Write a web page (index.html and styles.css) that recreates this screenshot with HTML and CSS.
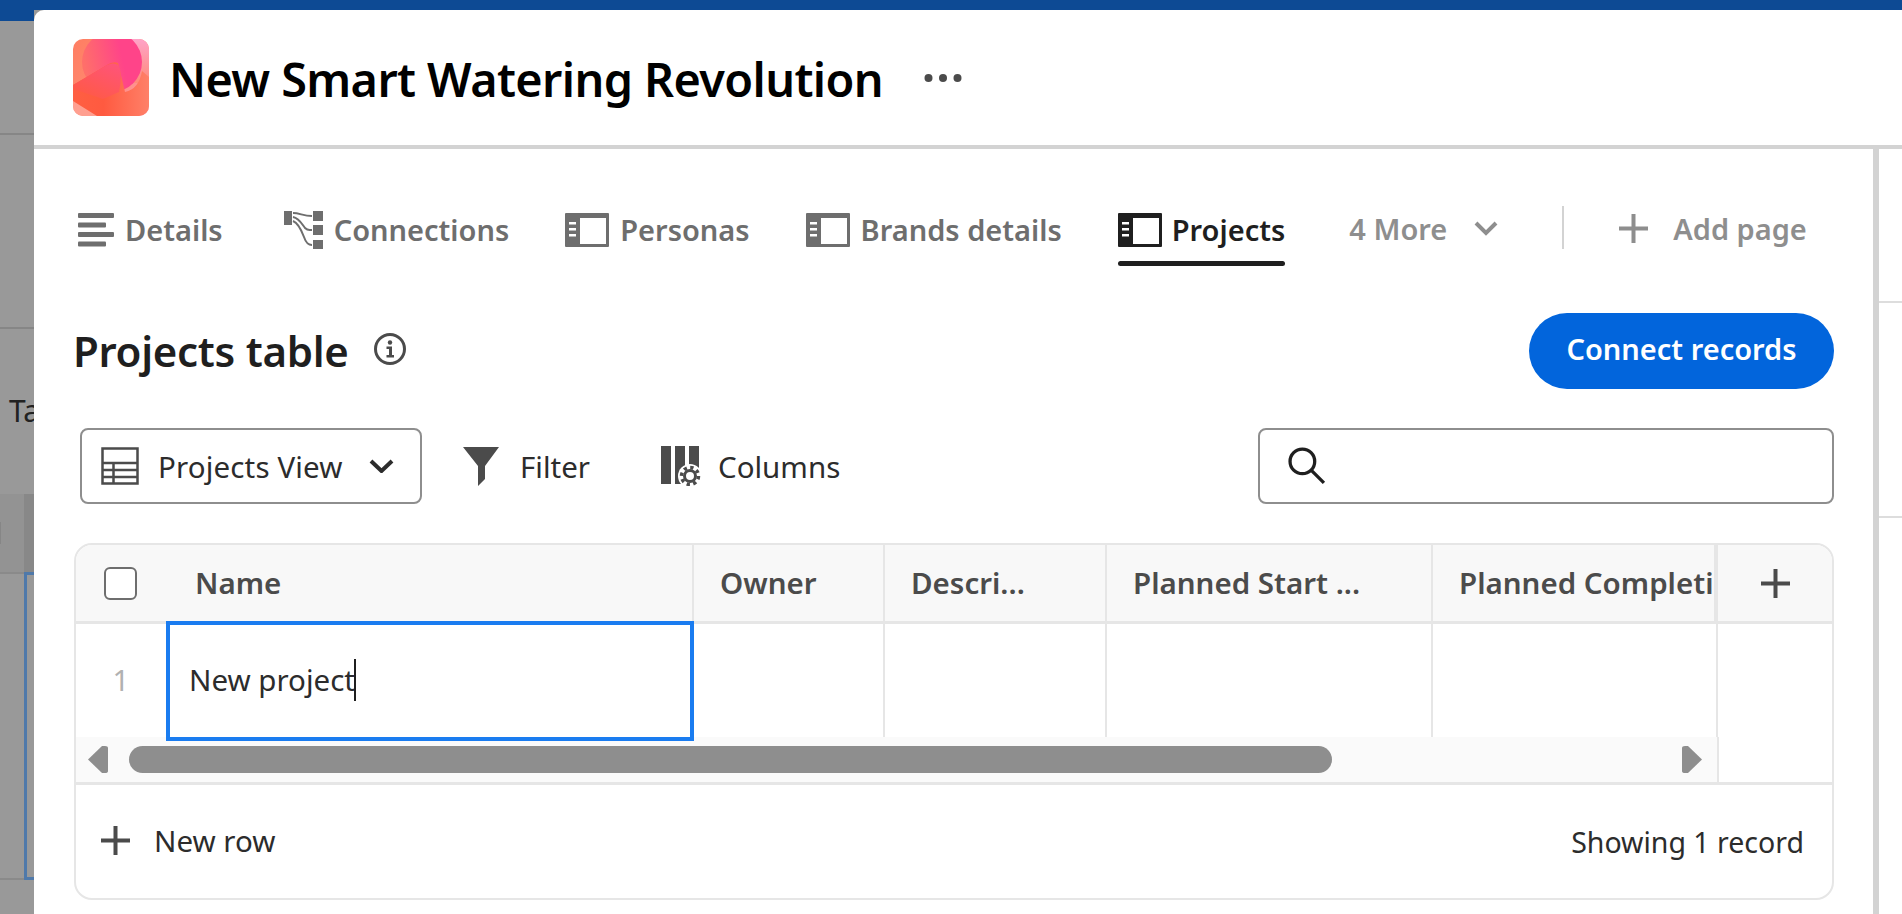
FILE: index.html
```html
<!DOCTYPE html>
<html lang="en">
<head>
<meta charset="utf-8">
<title>New Smart Watering Revolution</title>
<link rel="stylesheet" href="styles.css">
</head>
<body>
<div class="band"></div>
<aside class="backdrop">
  <div class="bd-sec bd-a"></div>
  <div class="bd-sec bd-b"></div>
  <div class="bd-sec bd-c"><span class="bd-text">Ta</span></div>
  <div class="bd-sec bd-d"><span class="bd-notch"></span></div>
  <div class="bd-sec bd-e"><div class="bd-outline"></div></div>
  <div class="bd-sec bd-f"></div>
</aside>
<main class="modal">
  <header class="modal-head">
    <svg class="logo" viewBox="0 0 76 77">
      <defs>
        <linearGradient id="lgBase" x1="0" y1="0" x2="1" y2="1"><stop offset="0" stop-color="#ff7e62"/><stop offset="0.55" stop-color="#ff8a72"/><stop offset="1" stop-color="#ffa0c8"/></linearGradient>
        <linearGradient id="lgCircle" x1="0.05" y1="0.6" x2="0.95" y2="0.4"><stop offset="0" stop-color="#ff6f6a"/><stop offset="0.7" stop-color="#ff4489"/><stop offset="1" stop-color="#ff4489"/></linearGradient>
        <linearGradient id="lgArrow" x1="0" y1="0" x2="1" y2="0"><stop offset="0" stop-color="#ff5f42"/><stop offset="0.4" stop-color="#ff5a40"/><stop offset="1" stop-color="#ff8068"/></linearGradient>
        <linearGradient id="lgSoft" x1="0.2" y1="1" x2="0.8" y2="0"><stop offset="0" stop-color="#ff5a42"/><stop offset="1" stop-color="#ff5478"/></linearGradient>
        <linearGradient id="lgCorner" x1="0" y1="0" x2="0" y2="1"><stop offset="0" stop-color="#ffa3c8"/><stop offset="1" stop-color="#ff8a78"/></linearGradient>
        <clipPath id="lgClip"><rect width="76" height="77" rx="10"/></clipPath>
      </defs>
      <g clip-path="url(#lgClip)">
        <rect width="76" height="77" fill="url(#lgBase)"/>
        <rect x="50" width="26" height="44" fill="url(#lgCorner)"/>
        <rect y="55" width="30" height="22" fill="#ff9f90"/>
        <circle cx="39" cy="23" r="30" fill="url(#lgCircle)"/>
        <path d="M0 46 L34 26 Q40 22 45 24 L52 53 Q66 50 69 32 L76 38 V77 H24 L0 62 Z" fill="url(#lgArrow)"/>
        <path d="M0 46 L34 26 Q40 23 45 26 Q50 32 46 53 L30 60 L0 50Z" fill="url(#lgSoft)"/>
      </g>
    </svg>
    <h1 class="title">New Smart Watering Revolution</h1>
    <svg class="more-dots" viewBox="0 0 38 10"><circle cx="4.500" cy="5" r="4"/><circle cx="19" cy="5" r="4"/><circle cx="33.500" cy="5" r="4"/></svg>
  </header>
  <div class="modal-body">
    <section class="panel">
      <nav class="tabs">
        <a class="tab t-details">
          <svg class="ico-details" viewBox="0 0 36 34"><rect y="0" width="36" height="5" rx="1"/><rect y="9.500" width="28" height="5" rx="1"/><rect y="19" width="36" height="5" rx="1"/><rect y="28.500" width="28" height="5" rx="1"/></svg>
          <span>Details</span>
        </a>
        <a class="tab t-conn">
          <svg class="ico-conn" viewBox="0 0 39 38"><rect y="0" width="8" height="14"/><rect x="29" y="0" width="10" height="10"/><rect x="29" y="14" width="10" height="10"/><rect x="29" y="29" width="10" height="9"/><path class="conn-line" d="M9 2 C16 2 19 5 28 5 M9 6 C15 7 18 13 21 17 C24 20 25 19 28 19 M9 10 C14 12 17 18 20 26 C22 32 24 34 28 34"/></svg>
          <span>Connections</span>
        </a>
        <a class="tab t-pers">
          <svg class="ico-page" viewBox="0 0 44 34"><rect width="44" height="34" rx="1"/><rect class="pane" x="15" y="5" width="26" height="26"/><rect class="pane" x="4" y="9" width="7" height="2.500"/><rect class="pane" x="4" y="15" width="7" height="2.500"/><rect class="pane" x="4" y="21" width="7" height="2.500"/></svg>
          <span>Personas</span>
        </a>
        <a class="tab t-brand">
          <svg class="ico-page" viewBox="0 0 44 34"><rect width="44" height="34" rx="1"/><rect class="pane" x="15" y="5" width="26" height="26"/><rect class="pane" x="4" y="9" width="7" height="2.500"/><rect class="pane" x="4" y="15" width="7" height="2.500"/><rect class="pane" x="4" y="21" width="7" height="2.500"/></svg>
          <span>Brands details</span>
        </a>
        <a class="tab tab-active">
          <svg class="ico-page" viewBox="0 0 44 34"><rect width="44" height="34" rx="1"/><rect class="pane" x="15" y="5" width="26" height="26"/><rect class="pane" x="4" y="9" width="7" height="2.500"/><rect class="pane" x="4" y="15" width="7" height="2.500"/><rect class="pane" x="4" y="21" width="7" height="2.500"/></svg>
          <span>Projects</span>
        </a>
        <a class="tab-more">
          <span>4 More</span>
          <svg class="chev-more" viewBox="0 0 24 15"><path d="M2 2 L12 12 L22 2"/></svg>
        </a>
        <span class="tab-divider"></span>
        <a class="tab-add">
          <svg class="plus-add" viewBox="0 0 29 29"><path d="M14.500 0 V29 M0 14.500 H29"/></svg>
          <span>Add page</span>
        </a>
      </nav>
      <div class="title-row">
        <div class="title-left">
          <h2 class="table-title">Projects table</h2>
          <svg class="ico-info" viewBox="0 0 32 32"><circle cx="16" cy="16" r="14.500"/><circle class="solid" cx="16" cy="9.500" r="2.200"/><path class="solid" d="M12.500 13.500 H18 V22 H20 V24.500 H12.500 V22 H15 V16 H12.500 Z"/></svg>
        </div>
        <button class="btn-primary">Connect records</button>
      </div>
      <div class="toolbar">
        <div class="view-select">
          <svg class="ico-table" viewBox="0 0 38 38"><path d="M1.500 1.500 H36.500 V36.500 H1.500 Z M1.500 16 H36.500 M1.500 23 H36.500 M1.500 30 H36.500 M12.500 16 V36.500"/></svg>
          <span class="view-name">Projects View</span>
          <svg class="chev-view" viewBox="0 0 25 14"><path d="M2 2 L12.500 12 L23 2"/></svg>
        </div>
        <div class="tool t-filter">
          <svg class="ico-filter" viewBox="0 0 36 39"><path d="M0 0 H36 L22 19 V32 L15 39 V19 Z"/></svg>
          <span>Filter</span>
        </div>
        <div class="tool t-cols">
          <svg class="ico-cols" viewBox="0 0 42 40"><rect x="0" y="0" width="10" height="38"/><rect x="14" y="0" width="10" height="38"/><rect x="28" y="0" width="10" height="38"/><circle class="halo" cx="29" cy="30" r="12"/><circle class="gear" cx="29" cy="30" r="5.500"/><circle class="teeth" cx="29" cy="30" r="8.500"/></svg>
          <span>Columns</span>
        </div>
        <div class="search">
          <svg class="ico-search" viewBox="0 0 37 37"><circle cx="14" cy="14" r="12"/><path d="M23 23 L35 35"/></svg>
        </div>
      </div>
      <div class="grid-card">
        <div class="row row-head">
          <div class="c c-num"><span class="checkbox"></span></div>
          <div class="c c-name"><span>Name</span></div>
          <div class="c c-owner"><span>Owner</span></div>
          <div class="c c-desc"><span>Descri...</span></div>
          <div class="c c-start"><span>Planned Start ...</span></div>
          <div class="c c-comp"><span class="clip">Planned Completion Date</span></div>
          <div class="c c-add"><svg class="plus-col" viewBox="0 0 29 29"><path d="M14.500 0 V29 M0 14.500 H29"/></svg></div>
        </div>
        <div class="row row-body">
          <div class="c c-num"><span class="rownum">1</span></div>
          <div class="c c-name"><div class="editor"><span>New project</span><i class="caret"></i></div></div>
          <div class="c c-owner"></div>
          <div class="c c-desc"></div>
          <div class="c c-start"></div>
          <div class="c c-comp"></div>
          <div class="c c-add"></div>
        </div>
        <div class="row row-scroll">
          <div class="scrollbar">
            <svg class="arrow" viewBox="0 0 20 27"><path d="M20 2 Q20 0 17 0 L14 0 L0 13.500 L14 27 L17 27 Q20 27 20 25 Z"/></svg>
            <span class="thumb"></span>
            <svg class="arrow arrow-r" viewBox="0 0 20 27"><path d="M0 2 Q0 0 3 0 L6 0 L20 13.500 L6 27 L3 27 Q0 27 0 25 Z"/></svg>
          </div>
          <div class="scroll-end"></div>
        </div>
        <div class="grid-foot">
          <div class="new-row">
            <svg class="plus-row" viewBox="0 0 29 29"><path d="M14.500 0 V29 M0 14.500 H29"/></svg>
            <span>New row</span>
          </div>
          <span class="count">Showing 1 record</span>
        </div>
      </div>
    </section>
    <aside class="side">
      <div class="side-a"></div>
      <div class="side-b"></div>
    </aside>
  </div>
</main>
</body>
</html>
```
FILE: styles.css
```css
* { box-sizing: border-box; }
html, body { margin: 0; height: 914px; overflow: hidden; }
body { background: #999; font-family: "Noto Sans", sans-serif; color: #1f1f1f; position: relative; }
svg { display: block; flex: none; }
.band { height: 10px; background: #0d4a94; }

/* dimmed page behind the dialog */
.backdrop { width: 34px; display: flex; flex-direction: column; height: 904px; }
.bd-sec { flex: none; width: 34px; }
.bd-a { height: 125px; background: linear-gradient(#0d4a94 11px, #999 11px); border-bottom: 2px solid #868686; }
.bd-b { height: 194px; border-bottom: 2px solid #868686; }
.bd-c { height: 165px; padding: 62px 0 0 9px; white-space: nowrap; }
.bd-text { font-size: 30px; line-height: 40px; color: #222; display: block; }
.bd-d { height: 78px; background: linear-gradient(90deg, #939393 24px, #888 24px); padding-top: 28px; }
.bd-notch { display: block; width: 1px; height: 22px; background: #868686; }
.bd-e { height: 308px; border-top: 2px solid #8a8a8a; border-bottom: 2px solid #8a8a8a; }
.bd-outline { height: 308px; margin: -2px 0 0 24px; border: solid #4f79aa; border-width: 3px 0 3px 3px; }
.bd-f { height: 34px; }

/* dialog */
.modal { position: absolute; left: 34px; top: 10px; right: 0; bottom: 0; background: #fff; border-top-left-radius: 10px; display: flex; flex-direction: column; }
.modal-head { height: 139px; flex: none; border-bottom: 4px solid #d3d3d3; padding: 29px 0 0 39px; display: flex; align-items: flex-start; }
.logo { width: 76px; height: 77px; }
.title { margin: 9px 0 0 20px; font-size: 46.800px; line-height: 62px; font-weight: 600; color: #000; letter-spacing: -0.6px; white-space: nowrap; }
.more-dots { width: 38px; height: 10px; margin: 34px 0 0 41px; fill: #4b4b4b; }
.modal-body { flex: 1; display: flex; min-height: 0; }
.panel { width: 1845px; flex: none; border-right: 6px solid #d3d3d3; padding: 0 0 0 40px; display: flex; flex-direction: column; }
.side { flex: 1; display: flex; flex-direction: column; }
.side-a { height: 154px; border-bottom: 2px solid #ddd; }
.side-b { height: 215px; border-bottom: 2px solid #ddd; }

/* tabs */
.tabs { height: 117px; padding: 57px 0 0 4px; display: flex; align-items: flex-start; font-size: 29px; font-weight: 600; color: #6e6e6e; flex: none; }
.tab { display: flex; align-items: center; height: 60px; gap: 11px; white-space: nowrap; padding-bottom: 12px; }
.tab span { margin-top: -2px; }
.tab svg { fill: #6e6e6e; }
.ico-details { width: 36px; height: 34px; }
.ico-conn { width: 39px; height: 38px; }
.conn-line { fill: none; stroke: #6e6e6e; stroke-width: 2; }
.ico-page { width: 44px; height: 34px; }
.pane { fill: #fff; }
.t-details { margin-right: 61px; }
.t-conn { margin-right: 56px; }
.t-pers { margin-right: 56px; }
.t-brand { margin-right: 56px; }
.tab-active { color: #1f1f1f; position: relative; gap: 10px; }
.tab-active svg { fill: #1f1f1f; }
.tab-active::after { content: ""; position: absolute; left: 0; right: 0; bottom: 0; height: 5px; border-radius: 3px; background: #1f1f1f; }
.tab-more { display: flex; align-items: center; height: 48px; color: #8e8e8e; margin-left: 64px; gap: 27px; white-space: nowrap; padding-bottom: 4px; }
.chev-more { width: 24px; height: 15px; fill: none; stroke: #8e8e8e; stroke-width: 4; }
.tab-divider { width: 2px; height: 43px; background: #d3d3d3; margin-left: 64px; }
.tab-add { display: flex; align-items: center; height: 48px; gap: 25px; margin-left: 55px; color: #8e8e8e; white-space: nowrap; padding-bottom: 4px; }
.plus-add { width: 29px; height: 29px; fill: none; stroke: #8e8e8e; stroke-width: 4; }

/* title row */
.title-row { flex: none; height: 76px; margin-top: 47px; width: 1760px; display: flex; justify-content: space-between; align-items: center; }
.title-left { display: flex; align-items: center; gap: 25px; margin-top: -4px; }
.table-title { margin: 4px 0 0 -1px; font-size: 42px; font-weight: 600; color: #1f1f1f; line-height: 50px; letter-spacing: -0.3px; white-space: nowrap; }
.ico-info { width: 32px; height: 32px; fill: none; stroke: #4b4b4b; stroke-width: 3; }
.ico-info .solid { fill: #4b4b4b; stroke: none; }
.btn-primary { width: 305px; height: 76px; border: 0; border-radius: 38px; background: #0265dc; color: #fff; font: 600 29px "Noto Sans", sans-serif; padding: 0 0 6px; }

/* toolbar */
.toolbar { flex: none; height: 76px; margin-top: 39px; padding-left: 6px; width: 1760px; display: flex; align-items: center; font-size: 29.500px; color: #2c2c2c; }
.view-select { width: 342px; height: 76px; border: 2px solid #8e8e8e; border-radius: 8px; padding-left: 19px; display: flex; align-items: center; background: #fff; white-space: nowrap; }
.view-name { letter-spacing: 0.15px; }
.ico-table { width: 38px; height: 38px; margin-right: 19px; fill: none; stroke: #4b4b4b; stroke-width: 2.500; }
.chev-view { width: 25px; height: 14px; margin-left: 26px; fill: none; stroke: #2c2c2c; stroke-width: 4; }
.tool { display: flex; align-items: center; white-space: nowrap; }
.t-filter { margin-left: 40px; gap: 20px; }
.ico-filter { width: 38px; height: 39px; fill: #4b4b4b; }
.t-cols { margin-left: 71px; gap: 15px; }
.ico-cols { width: 42px; height: 40px; fill: #4b4b4b; }
.ico-cols .halo { fill: #fff; }
.ico-cols .gear { fill: none; stroke: #4b4b4b; stroke-width: 3; }
.ico-cols .teeth { fill: none; stroke: #4b4b4b; stroke-width: 3.500; stroke-dasharray: 3.300 3.370; }
.search { margin-left: auto; width: 576px; height: 76px; border: 2px solid #8e8e8e; border-radius: 8px; padding-left: 28px; display: flex; align-items: center; background: #fff; }
.ico-search { width: 38px; height: 38px; fill: none; stroke: #1f1f1f; stroke-width: 3.200; }

/* grid */
.grid-card { flex: none; width: 1760px; height: 357px; margin-top: 39px; border: 2px solid #e6e6e6; border-radius: 18px; display: flex; flex-direction: column; }
.row { display: flex; flex: none; }
.c { flex: none; border-right: 2px solid #e6e6e6; display: flex; align-items: center; }
.c-num { width: 90px; border-right: 0; }
.c-name { width: 528px; }
.c-owner { width: 191px; }
.c-desc { width: 222px; }
.c-start { width: 326px; }
.c-comp { width: 285px; border-right-width: 4px; }
.c-add { flex: 1; border-right: 0; }
.row-head { height: 79px; background: #f8f8f8; border-bottom: 3px solid #e6e6e6; border-radius: 16px 16px 0 0; font-size: 29.500px; font-weight: 600; color: #4b4b4b; white-space: nowrap; }
.row-head .c { padding: 0 0 2px 26px; overflow: hidden; }
.row-head .c-num { padding: 0 0 0 28px; }
.row-head .c-name { padding-left: 29px; }
.row-head .c-add { padding: 0 0 0 43px; }
.clip { display: block; overflow: hidden; }
.checkbox { width: 33px; height: 33px; border: 2px solid #6e6e6e; border-radius: 6px; background: #fff; }
.plus-col, .plus-row { width: 29px; height: 29px; fill: none; stroke: #4b4b4b; stroke-width: 4; }
.row-body { height: 113px; }
.row-body .c-num { justify-content: center; padding-bottom: 2px; }
.row-body .c-comp { border-right-width: 2px; }
.rownum { font-size: 29.500px; color: #b1b1b1; }
.row-body .c-name { border-right: 0; position: relative; }
.editor { position: absolute; left: 0; right: 0; top: -3px; height: 120px; border: 4px solid #1a7cf0; background: #fff; display: flex; align-items: center; padding: 0 0 3px 19px; font-size: 29.500px; color: #2c2c2c; z-index: 2; white-space: nowrap; }
.caret { display: block; width: 2px; height: 42px; background: #1f1f1f; margin-left: -1px; }
.row-scroll { height: 48px; border-bottom: 3px solid #e6e6e6; }
.scrollbar { width: 1641px; height: 45px; background: #fafafa; display: flex; align-items: center; padding: 0 15px 0 12px; }
.arrow { width: 20px; height: 27px; fill: #8e8e8e; }
.thumb { width: 1203px; height: 27px; margin-left: 21px; border-radius: 14px; background: #8e8e8e; }
.arrow-r { margin-left: auto; }
.scroll-end { flex: 1; border-left: 2px solid #e6e6e6; }
.grid-foot { flex: 1; display: flex; align-items: center; justify-content: space-between; padding: 0 28px 2px 25px; font-size: 29.500px; color: #2c2c2c; }
.new-row { display: flex; align-items: center; gap: 24px; }
.count { white-space: nowrap; font-size: 28.500px; margin-top: 2px; }
```
